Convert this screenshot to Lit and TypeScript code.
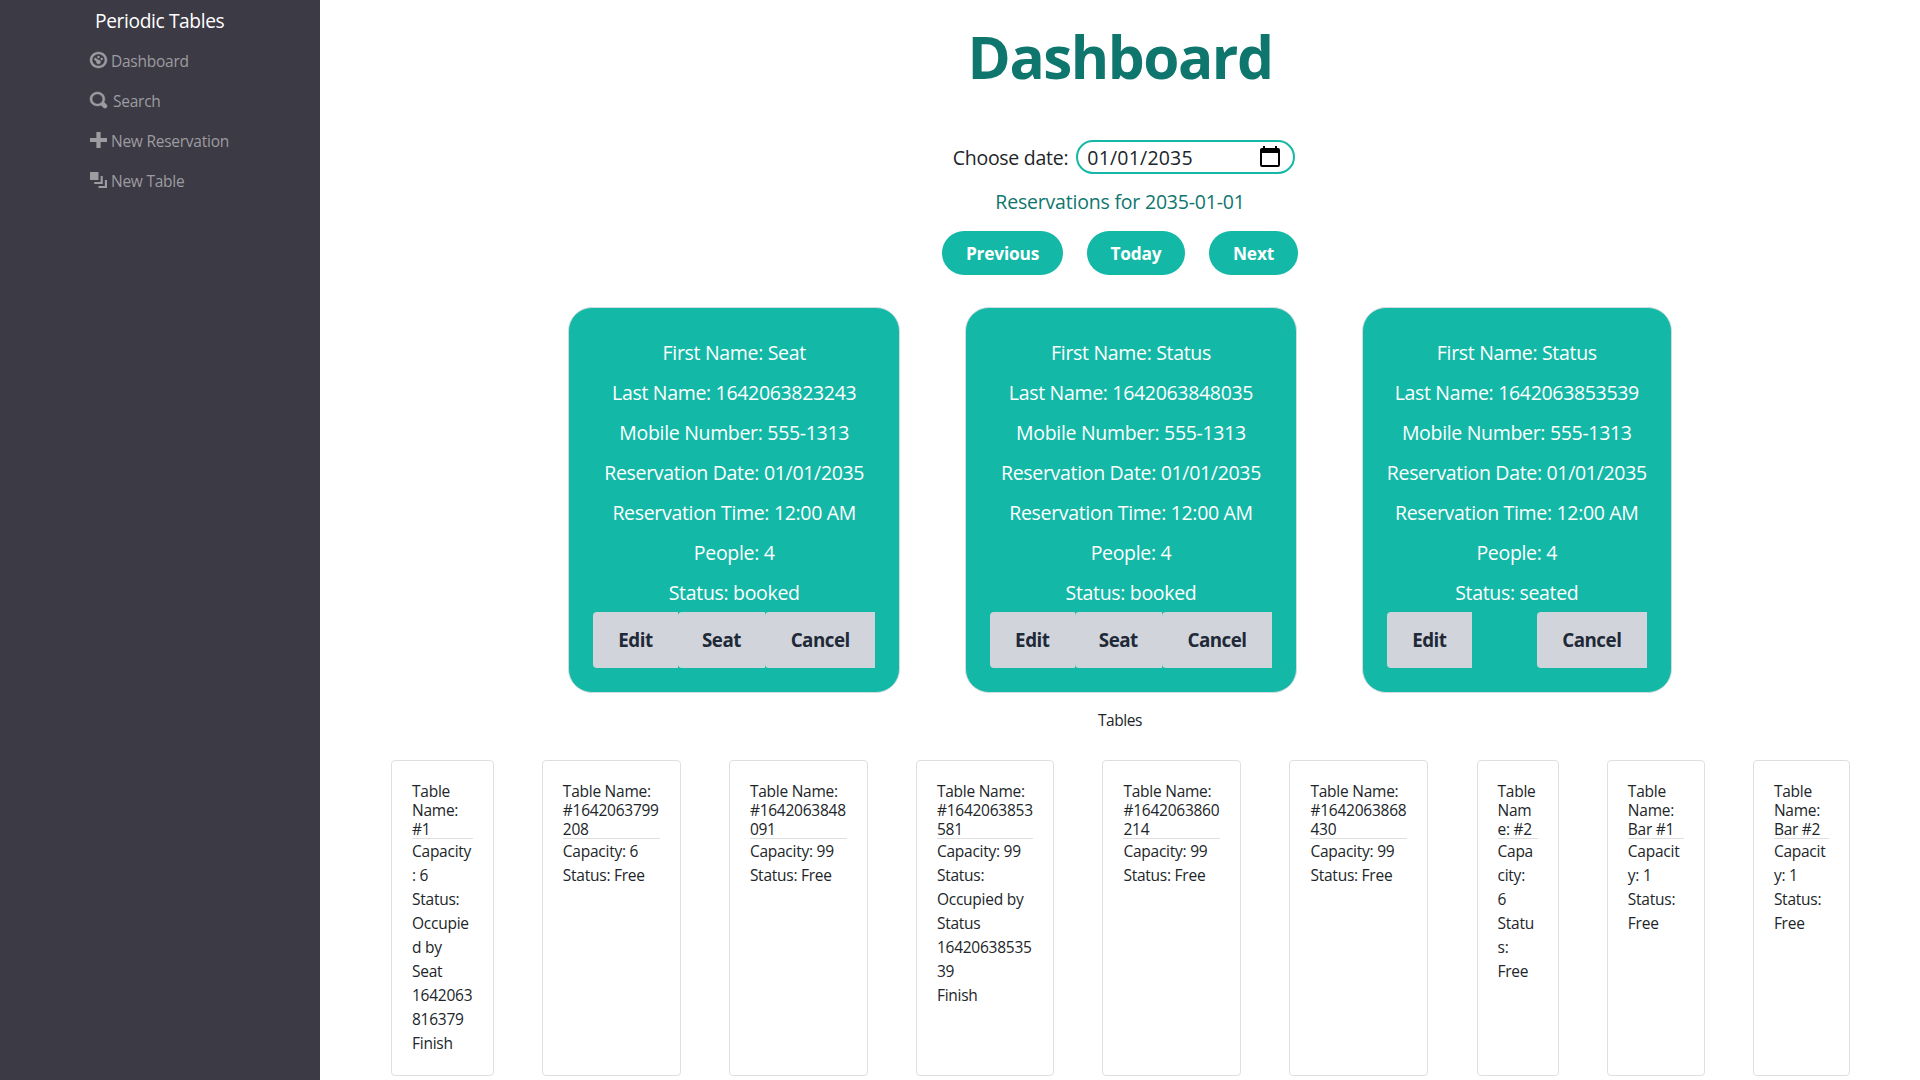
import { LitElement, html, css, svg } from "lit";
import { customElement } from "lit/decorators.js";
import { classMap } from "lit/directives/class-map.js";

const ICONS = {
  dashboard:
    "M4 0c-2.2 0-4 1.8-4 4s1.8 4 4 4 4-1.8 4-4-1.8-4-4-4zm0 1c1.66 0 3 1.34 3 3s-1.34 3-3 3-3-1.34-3-3 1.34-3 3-3zm0 1c-.28 0-.5.22-.5.5s.22.5.5.5.5-.22.5-.5-.22-.5-.5-.5zm-1.66 1a.5.5 0 0 0-.19.84l.91.91c-.02.08-.06.16-.06.25 0 .55.45 1 1 1s1-.45 1-1-.45-1-1-1c-.09 0-.17.04-.25.06l-.91-.91a.5.5 0 0 0-.44-.16.5.5 0 0 0-.06 0zm3.16 0c-.28 0-.5.22-.5.5s.22.5.5.5.5-.22.5-.5-.22-.5-.5-.5z",
  search:
    "M3.5 0c-1.93 0-3.5 1.57-3.5 3.5s1.57 3.5 3.5 3.5c.59 0 1.17-.14 1.66-.41a1 1 0 0 0 .13.13l1 1a1.02 1.02 0 1 0 1.44-1.44l-1-1a1 1 0 0 0-.16-.13c.27-.49.44-1.06.44-1.66 0-1.93-1.55-3.5-3.5-3.5zm0 1c1.39 0 2.5 1.11 2.5 2.5 0 .66-.24 1.27-.66 1.72-.01.01-.02.02-.03.03a1 1 0 0 0-.13.13c-.44.4-1.04.63-1.69.63-1.39 0-2.5-1.11-2.5-2.5s1.11-2.5 2.5-2.5z",
  plus: "M3 0v3h-3v2h3v3h2v-3h3v-2h-3v-3h-2z",
  layers: "M0 0v4h4v-4h-4zm5 2v3h-3v1h4v-4h-1zm2 2v3h-3v1h4v-4h-1z",
};

const NAV = [
  { icon: ICONS.dashboard, label: "Dashboard", round: true },
  { icon: ICONS.search, label: "Search", wide: true, round: true },
  { icon: ICONS.plus, label: "New Reservation" },
  { icon: ICONS.layers, label: "New Table" },
];

const RESERVATIONS = [
  { first: "Seat", last: "1642063823243", status: "booked" },
  { first: "Status", last: "1642063848035", status: "booked" },
  { first: "Status", last: "1642063853539", status: "seated" },
];

const TABLES = [
  { width: 102.5, name: ["Table", "Name:", "#1"], rows: ["Capacity", ": 6", "Status:", "Occupie", "d by", "Seat", "1642063", "816379", "Finish"] },
  { width: 138.7, name: ["Table Name:", "#1642063799", "208"], rows: ["Capacity: 6", "Status: Free"] },
  { width: 138.7, name: ["Table Name:", "#1642063848", "091"], rows: ["Capacity: 99", "Status: Free"] },
  { width: 138.2, name: ["Table Name:", "#1642063853", "581"], rows: ["Capacity: 99", "Status:", "Occupied by", "Status", "16420638535", "39", "Finish"] },
  { width: 138.7, name: ["Table Name:", "#1642063860", "214"], rows: ["Capacity: 99", "Status: Free"] },
  { width: 138.7, name: ["Table Name:", "#1642063868", "430"], rows: ["Capacity: 99", "Status: Free"] },
  { width: 82, name: ["Table", "Nam", "e: #2"], rows: ["Capa", "city:", "6", "Statu", "s:", "Free"] },
  { width: 97.7, name: ["Table", "Name:", "Bar #1"], rows: ["Capacit", "y: 1", "Status:", "Free"] },
  { width: 97.2, name: ["Table", "Name:", "Bar #2"], rows: ["Capacit", "y: 1", "Status:", "Free"] },
];

@customElement("app-root")
export class AppRoot extends LitElement {
  static styles = css`
    :host {
      display: block;
      font-family: "Open Sans", "Noto Sans", sans-serif;
      font-size: 15.5px;
      letter-spacing: -0.25px;
      line-height: 24px;
      color: #212529;
    }
    * { box-sizing: border-box; }
    .layout { display: flex; height: 1080px; overflow: hidden; background: #fff; }
    .sidebar { flex: none; width: 320px; background: #3c3a44; padding: 6px 0 0 90px; }
    .brand { height: 30px; line-height: 30px; padding-left: 5px; margin-bottom: 4px; color: #fff; font-size: 19.2px; letter-spacing: -0.38px; }
    .nav { display: flex; align-items: center; height: 40px; padding-top: 2px; color: #9d9ca1; }
    .nav svg { width: 17px; height: 16px; margin-right: 4px; margin-bottom: 2px; overflow: visible; }
    .nav.round svg { stroke: currentColor; stroke-width: 0.22; }
    .nav.wide svg { margin-right: 6px; }
    .main { flex: 1; display: flex; flex-direction: column; align-items: center; white-space: nowrap; }
    h1 { margin: 26px 0 54px; height: 60px; line-height: 60px; font-size: 58.5px; font-weight: 700; letter-spacing: -1.5px; color: #0f766e; }
    .date { display: flex; align-items: center; height: 34px; padding-left: 8px; font-size: 19.5px; letter-spacing: -0.27px; }
    .date span { padding-top: 2px; }
    .field { display: flex; align-items: center; justify-content: space-between; width: 219px; height: 34px; margin-left: 8px; padding: 0 13px 0 9px; border: 2px solid #14b8a6; border-radius: 17px; letter-spacing: 0.2px; }
    .field svg { width: 20px; height: 21px; margin-bottom: 2px; }
    .caption { height: 30px; line-height: 30px; margin: 13px 0 14px; font-size: 19.5px; letter-spacing: -0.2px; color: #0f766e; }
    .pager { display: flex; gap: 24px; height: 44px; }
    .pager button { border: 0; padding: 1px 0 0; height: 44px; border-radius: 22px; background: #14b8a6; color: #fff; font: 700 17.3px/43px "Open Sans", sans-serif; letter-spacing: -0.2px; }
    .prev { width: 121px; }
    .today { width: 98px; }
    .next { width: 89px; }
    .cards { display: flex; gap: 64.8px; margin-top: 32px; }
    .card { width: 332px; height: 386px; padding: 25px 24px 23px; border: 1px solid #d1dbe0; border-radius: 24px; background: #14b8a6; color: #fff; text-align: center; font-size: 19.5px; line-height: 40px; letter-spacing: -0.32px; }
    .card.seated { width: 310px; }
    .actions { display: flex; justify-content: space-between; margin-top: -1px; }
    .actions button { border: 0; padding: 1px 0 0; height: 56px; border-radius: 4px 0 0 4px; background: #d1d5db; color: #1f2937; font: 700 18.8px/55px "Open Sans", sans-serif; letter-spacing: -0.5px; }
    .edit { width: 85px; }
    .seat { width: 88px; }
    .cancel { flex: none; width: 110px; }
    .heading { height: 24px; margin: 14px 0 29px; padding-top: 0.5px; letter-spacing: -0.4px; }
    .tables { display: flex; gap: 48.35px; width: 1458px; }
    .table { flex: none; height: 316px; padding: 21px 20px 0; border: 1px solid #dfdfdf; border-radius: 4px; }
    .name { height: 57px; line-height: 19.2px; border-bottom: 1px solid #dfdfdf; }
  `;

  render() {
    return html`
      <div class="layout">
        <nav class="sidebar">
          <div class="brand">Periodic Tables</div>
          ${NAV.map(
            (n) => html`<div class=${classMap({ nav: true, wide: !!n.wide, round: !!n.round })}>
              <svg viewBox="0 0 8 8" preserveAspectRatio="none" fill="currentColor">${svg`<path d=${n.icon} />`}</svg><span>${n.label}</span>
            </div>`,
          )}
        </nav>
        <main class="main">
          <h1>Dashboard</h1>
          <div class="date">
            <span>Choose date:</span>
            <div class="field">
              <span>01/01/2035</span>
              <svg viewBox="0 0 20 21" fill="#000"><path fill-rule="evenodd" d="M3 0h2v2h10V0h2v2h1q2 0 2 2v15q0 2-2 2H2q-2 0-2-2V4q0-2 2-2h1zM2 7v12h16V7z" /></svg>
            </div>
          </div>
          <div class="caption">Reservations for 2035-01-01</div>
          <div class="pager">
            <button class="prev">Previous</button>
            <button class="today">Today</button>
            <button class="next">Next</button>
          </div>
          <section class="cards">
            ${RESERVATIONS.map(
              (r) => html`<article class=${classMap({ card: true, seated: r.status === "seated" })}>
                <div>First Name: ${r.first}</div>
                <div>Last Name: ${r.last}</div>
                <div>Mobile Number: 555-1313</div>
                <div>Reservation Date: 01/01/2035</div>
                <div>Reservation Time: 12:00 AM</div>
                <div>People: 4</div>
                <div>Status: ${r.status}</div>
                <div class="actions">
                  <button class="edit">Edit</button>
                  ${r.status === "booked" ? html`<button class="seat">Seat</button>` : null}
                  <button class="cancel">Cancel</button>
                </div>
              </article>`,
            )}
          </section>
          <div class="heading">Tables</div>
          <section class="tables">
            ${TABLES.map(
              (t) => html`<article class="table" style="width:${t.width}px">
                <div class="name">${t.name.map((l) => html`<div>${l}</div>`)}</div>
                ${t.rows.map((l) => html`<div>${l}</div>`)}
              </article>`,
            )}
          </section>
        </main>
      </div>
    `;
  }
}
